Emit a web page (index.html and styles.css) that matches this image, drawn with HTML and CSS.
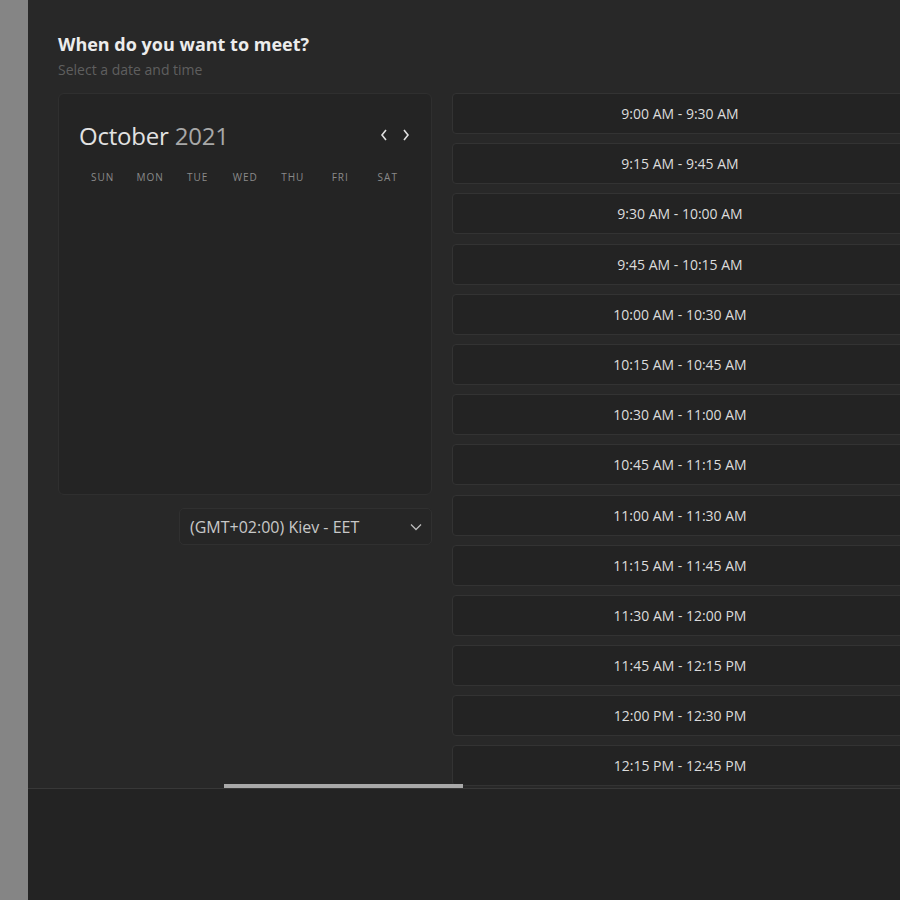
FILE: index.html
```html
<!DOCTYPE html>
<html>
<head>
<meta charset="utf-8">
<link rel="stylesheet" href="styles.css">
</head>
<body>
<div class="rail"></div>
<div class="main">
  <div class="scroller">
    <h2 class="title">When do you want to meet?</h2>
    <p class="subtitle">Select a date and time</p>
    <div class="columns">
      <div class="left">
        <div class="calendar">
          <div class="cal-head">
            <div class="month"><span class="m">October</span> <span class="y">2021</span></div>
            <div class="nav">
              <svg width="10" height="14" viewBox="0 0 10 14"><path d="M7 2 L3 7 L7 12" fill="none" stroke="#e0e0e0" stroke-width="1.6"/></svg>
              <svg width="10" height="14" viewBox="0 0 10 14"><path d="M3 2 L7 7 L3 12" fill="none" stroke="#e0e0e0" stroke-width="1.6"/></svg>
            </div>
          </div>
          <div class="weekdays">
            <span>SUN</span><span>MON</span><span>TUE</span><span>WED</span><span>THU</span><span>FRI</span><span>SAT</span>
          </div>
        </div>
        <div class="tz">
          <span>(GMT+02:00) Kiev - EET</span>
          <svg width="12" height="8" viewBox="0 0 12 8"><path d="M1 1.5 L6 6.5 L11 1.5" fill="none" stroke="#bbb" stroke-width="1.3"/></svg>
        </div>
      </div>
      <div class="slots">
        <div class="slot">9:00 AM - 9:30 AM</div>
        <div class="slot">9:15 AM - 9:45 AM</div>
        <div class="slot">9:30 AM - 10:00 AM</div>
        <div class="slot">9:45 AM - 10:15 AM</div>
        <div class="slot">10:00 AM - 10:30 AM</div>
        <div class="slot">10:15 AM - 10:45 AM</div>
        <div class="slot">10:30 AM - 11:00 AM</div>
        <div class="slot">10:45 AM - 11:15 AM</div>
        <div class="slot">11:00 AM - 11:30 AM</div>
        <div class="slot">11:15 AM - 11:45 AM</div>
        <div class="slot">11:30 AM - 12:00 PM</div>
        <div class="slot">11:45 AM - 12:15 PM</div>
        <div class="slot">12:00 PM - 12:30 PM</div>
        <div class="slot">12:15 PM - 12:45 PM</div>
      </div>
    </div>
    <div class="thumb"></div>
  </div>
  <div class="footer"></div>
</div>
</body>
</html>
```
FILE: styles.css
```css
html, body {
  margin: 0;
  padding: 0;
  height: 100%;
  overflow: hidden;
  background: #232323;
  font-family: "Open Sans", "Noto Sans", sans-serif;
}
body {
  display: flex;
  width: 900px;
  height: 900px;
}
.rail {
  width: 28px;
  flex: none;
  background: #858585;
}
.main {
  flex: 1;
  display: flex;
  flex-direction: column;
  min-width: 0;
  overflow: hidden;
}
.scroller {
  position: relative;
  height: 788px;
  flex: none;
  background: #282828;
  padding: 31px 0 0 30px;
  box-sizing: border-box;
  overflow: hidden;
}
.footer {
  flex: 1;
  background: #232323;
  border-top: 1px solid #383838;
}
.title {
  margin: 0;
  font-size: 18px;
  font-weight: 700;
  line-height: 26px;
  color: #ececec;
}
.subtitle {
  margin: 3px 0 0 0;
  font-size: 14px;
  line-height: 20px;
  color: #5f5f5f;
}
.columns {
  display: flex;
  gap: 20px;
  margin-top: 13px;
  width: 830px;
}
.left {
  width: 374px;
  flex: none;
  display: flex;
  flex-direction: column;
  align-items: flex-end;
}
.calendar {
  width: 374px;
  height: 402px;
  box-sizing: border-box;
  background: #242424;
  border: 1px solid #2f2f2f;
  border-radius: 6px;
  padding: 23px 20px 0 20px;
}
.cal-head {
  display: flex;
  align-items: center;
  justify-content: space-between;
  height: 36px;
}
.month {
  font-size: 24px;
  font-weight: 400;
  color: #e2e2e2;
  letter-spacing: -0.2px;
}
.month .y {
  color: #a8a8a8;
}
.nav {
  display: flex;
  gap: 12px;
  padding-right: 0;
}
.weekdays {
  display: grid;
  grid-template-columns: repeat(7, 47.5px);
  margin-top: 17px;
  font-size: 10px;
  letter-spacing: 1px;
  color: #8a8a8a;
  text-align: center;
}
.tz {
  margin-top: 13px;
  width: 253px;
  height: 37px;
  box-sizing: border-box;
  background: #262626;
  border: 1px solid #303030;
  border-radius: 5px;
  display: flex;
  align-items: center;
  justify-content: space-between;
  padding: 0 9px 0 10px;
  font-size: 16px;
  color: #c8c8c8;
}
.slots {
  width: 456px;
  flex: none;
  display: flex;
  flex-direction: column;
  gap: 9.2px;
}
.slot {
  height: 41px;
  box-sizing: border-box;
  background: #232323;
  border: 1px solid #333333;
  border-radius: 4px;
  display: flex;
  align-items: center;
  justify-content: center;
  font-size: 14px;
  font-weight: 500;
  color: #dcdcdc;
}
.thumb {
  position: absolute;
  left: 196px;
  bottom: 0;
  width: 239px;
  height: 4px;
  background: #a9a9a9;
}
```
